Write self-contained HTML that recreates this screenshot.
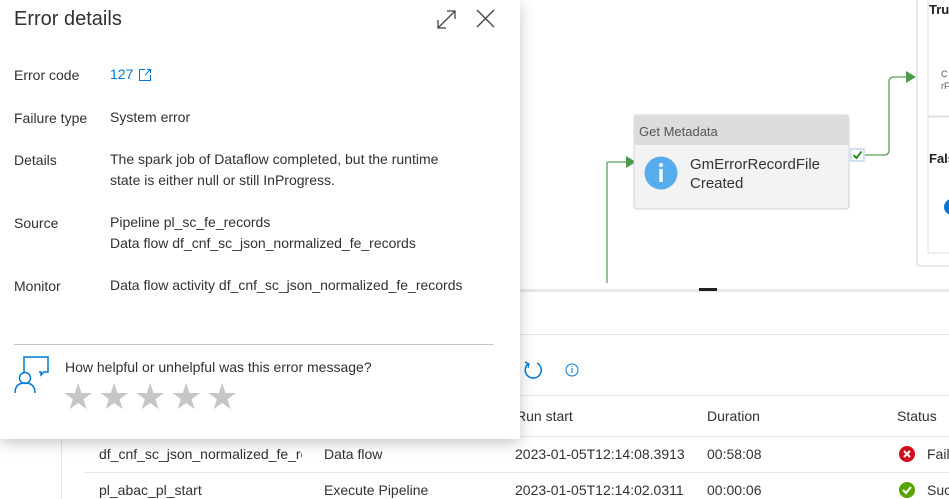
<!DOCTYPE html>
<html><head><style>
*{margin:0;padding:0;box-sizing:border-box}
body{width:949px;height:499px;overflow:hidden;background:#fff;font-family:"Liberation Sans",sans-serif;color:#323130;position:relative;font-size:14px}
.a{position:absolute;white-space:nowrap}
.panel{position:absolute;left:0;top:0;width:520px;height:439px;background:#fff;box-shadow:0 4px 14px rgba(0,0,0,.22);z-index:5}
.lbl{position:absolute;left:14px;font-size:14px}
.val{position:absolute;left:110px;font-size:14px;line-height:21px}
.star{color:#c8c6c4;font-size:36px;position:absolute;top:376px}
</style></head><body>
<div class="a" style="left:520px;top:289px;width:429px;height:3px;background:#e8e8e8"></div>
<div class="a" style="left:699px;top:288px;width:18px;height:3px;background:#222"></div>
<svg class="a" style="left:520px;top:0" width="429" height="290">
<path d="M87 283 V163 Q87 162 90 162 H108" fill="none" stroke="#5a9e5a" stroke-width="1.3"/>
<path d="M106 156 L116 162 L106 168Z" fill="#4c9a4c"/>
<path d="M345 155 H364 Q369 155 369 150 V82 Q369 77 374 77 H388" fill="none" stroke="#5a9e5a" stroke-width="1.3"/>
<path d="M386 71 L396 77 L386 83Z" fill="#4c9a4c"/>
<rect x="397" y="-2" width="40" height="268" rx="3" fill="#fff" stroke="#d0d0d0"/>
<rect x="408" y="-2" width="30" height="118" fill="#fff" stroke="#e0e0e0"/>
<rect x="408" y="117" width="30" height="136" fill="#fff" stroke="#e0e0e0"/>
<circle cx="432" cy="207" r="8" fill="#0078d4"/>
<rect x="114" y="115" width="215" height="94" rx="3" fill="#f3f3f3" stroke="#d0d0d0"/>
<rect x="115" y="116" width="213" height="29" fill="#dcdcdc"/>
<circle cx="141" cy="173" r="16.5" fill="#57acee"/>
<circle cx="141" cy="165" r="2" fill="#fff"/>
<rect x="139.3" y="169" width="3.4" height="13" fill="#fff"/>
<rect x="331" y="149" width="13" height="12" fill="#fff" stroke="#9cc4ea"/>
<path d="M333.5 155 L336.5 158 L341.5 151.5" fill="none" stroke="#128012" stroke-width="1.8"/>
</svg>
<div class="a" style="left:639px;top:124px;font-size:13px;color:#555">Get Metadata</div>
<div class="a" style="left:690px;top:155px;font-size:15px;line-height:19px;color:#333">GmErrorRecordFile<br>Created</div>
<div class="a" style="left:929px;top:2px;font-size:13px;font-weight:bold;color:#222">Tru</div>
<div class="a" style="left:941px;top:68px;font-size:9px;color:#555;line-height:12px">C<br>rF</div>
<div class="a" style="left:929px;top:151px;font-size:13px;font-weight:bold;color:#222">Fals</div>
<div class="a" style="left:520px;top:334px;width:429px;height:1px;background:#e5e5e5"></div>
<svg class="a" style="left:520px;top:358px" width="70" height="24"><path d="M17 5 A8 8 0 1 1 8 6" fill="none" stroke="#0078d4" stroke-width="1.5"/><path d="M5 4 L9 6 L8 10" fill="none" stroke="#0078d4" stroke-width="1.3"/><circle cx="52" cy="12" r="6" fill="none" stroke="#0078d4" stroke-width="1"/><rect x="51.5" y="10" width="1" height="5" fill="#0078d4"/><rect x="51.5" y="8" width="1" height="1" fill="#0078d4"/></svg>
<div class="a" style="left:520px;top:395px;width:429px;height:1px;background:#e5e5e5"></div>
<div class="a" style="left:61px;top:439px;width:1px;height:60px;background:#e5e5e5"></div>
<div class="a" style="left:516px;top:408px">Run start</div>
<div class="a" style="left:707px;top:408px">Duration</div>
<div class="a" style="left:897px;top:408px">Status</div>
<div class="a" style="left:84px;top:436px;width:865px;height:1px;background:#e8e8e8"></div>
<div class="a" style="left:84px;top:472px;width:865px;height:1px;background:#e8e8e8"></div>
<div class="a" style="left:99px;top:446px;width:203px;overflow:hidden">df_cnf_sc_json_normalized_fe_records</div>
<div class="a" style="left:324px;top:446px">Data flow</div>
<div class="a" style="left:515px;top:446px;width:170px;overflow:hidden">2023-01-05T12:14:08.3913</div>
<div class="a" style="left:707px;top:446px">00:58:08</div>
<svg class="a" style="left:898px;top:445px" width="18" height="18"><circle cx="9" cy="9" r="8" fill="#d00f1c"/><path d="M6 6 L12 12 M12 6 L6 12" stroke="#fff" stroke-width="2"/></svg>
<div class="a" style="left:927px;top:446px">Fail</div>
<div class="a" style="left:99px;top:482px">pl_abac_pl_start</div>
<div class="a" style="left:324px;top:482px">Execute Pipeline</div>
<div class="a" style="left:515px;top:482px">2023-01-05T12:14:02.0311</div>
<div class="a" style="left:707px;top:482px">00:00:06</div>
<svg class="a" style="left:898px;top:481px" width="18" height="18"><circle cx="9" cy="9" r="8" fill="#57a300"/><path d="M5 9 L8 12 L13 6" fill="none" stroke="#fff" stroke-width="2"/></svg>
<div class="a" style="left:927px;top:482px">Suc</div>
<div class="panel">
<div class="a" style="left:14px;top:8px;font-size:20px;color:#323130">Error details</div>
<svg class="a" style="left:436px;top:8px" width="60" height="22"><path d="M2 20 L19 3 M11 3 H19 V11 M2 12 V20 H10" fill="none" stroke="#444" stroke-width="1.3"/><path d="M41 2 L58 19 M58 2 L41 19" stroke="#444" stroke-width="1.4"/></svg>
<div class="lbl" style="top:67px">Error code</div>
<div class="val" style="top:64px;color:#0078d4">127</div>
<svg class="a" style="left:138px;top:68px" width="14" height="14"><path d="M7 1.5 H1.5 V12.5 H12.5 V7" fill="none" stroke="#0078d4" stroke-width="1"/><path d="M7 7 L12.5 1.5 M9 1.5 H12.5 V5" fill="none" stroke="#0078d4" stroke-width="1"/></svg>
<div class="lbl" style="top:110px">Failure type</div>
<div class="val" style="top:107px">System error</div>
<div class="lbl" style="top:152px">Details</div>
<div class="val" style="top:149px">The spark job of Dataflow completed, but the runtime<br>state is either null or still InProgress.</div>
<div class="lbl" style="top:215px">Source</div>
<div class="val" style="top:212px">Pipeline pl_sc_fe_records<br>Data flow df_cnf_sc_json_normalized_fe_records</div>
<div class="lbl" style="top:278px">Monitor</div>
<div class="val" style="top:275px">Data flow activity df_cnf_sc_json_normalized_fe_records</div>
<div class="a" style="left:14px;top:344px;width:480px;height:1px;background:#c8c6c4"></div>
<svg class="a" style="left:13px;top:354px" width="38" height="40"><path d="M11 18 V3 H35 V18 H31 L28 21 V18 H26" fill="none" stroke="#0078d4" stroke-width="1.5"/><circle cx="12" cy="24" r="5.5" fill="none" stroke="#0078d4" stroke-width="1.5"/><path d="M2 39 Q2 29 12 29 Q22 29 22 39" fill="none" stroke="#0078d4" stroke-width="1.5"/></svg>
<div class="a" style="left:65px;top:359px;font-size:14px">How helpful or unhelpful was this error message?</div>
<div class="star" style="left:62px">★</div>
<div class="star" style="left:98px">★</div>
<div class="star" style="left:134px">★</div>
<div class="star" style="left:170px">★</div>
<div class="star" style="left:206px">★</div>
</div>
</body></html>
